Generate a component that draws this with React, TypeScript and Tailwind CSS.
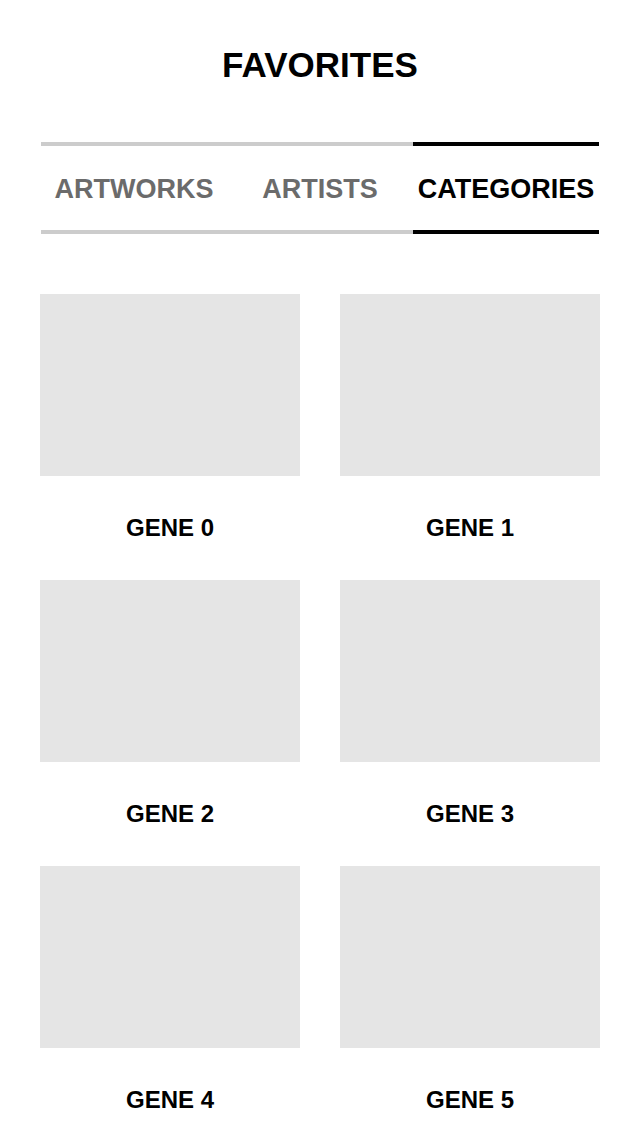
const tabs = ["ARTWORKS", "ARTISTS", "CATEGORIES"];
const genes = [0, 1, 2, 3, 4, 5];

export default function App() {
  const active = 2;

  return (
    <div
      className="w-[640px] h-[1136px] overflow-hidden bg-white text-black"
      style={{ fontFamily: '"Liberation Sans", Arial, sans-serif' }}
    >
      <h1 className="pt-[41px] h-[142px] text-center text-[35px] leading-[48px] font-bold">
        FAVORITES
      </h1>

      <div className="mx-[41px] w-[558px] flex">
        {tabs.map((tab, i) => (
          <div
            key={tab}
            className={
              "flex-1 h-[92px] pt-[2px] flex items-center justify-center border-y-4 text-[27px] font-bold " +
              (i === active
                ? "border-black text-black"
                : "border-[#cccccc] text-[#6b6b6b]")
            }
          >
            {tab}
          </div>
        ))}
      </div>

      <div className="mt-[60px] px-[40px] grid grid-cols-2 gap-x-[40px]">
        {genes.map((g) => (
          <div key={g} className="flex flex-col">
            <div className="h-[182px] bg-[#e5e5e5]" />
            <div className="h-[104px] flex items-center justify-center text-[24px] font-bold">
              GENE {g}
            </div>
          </div>
        ))}
      </div>
    </div>
  );
}
